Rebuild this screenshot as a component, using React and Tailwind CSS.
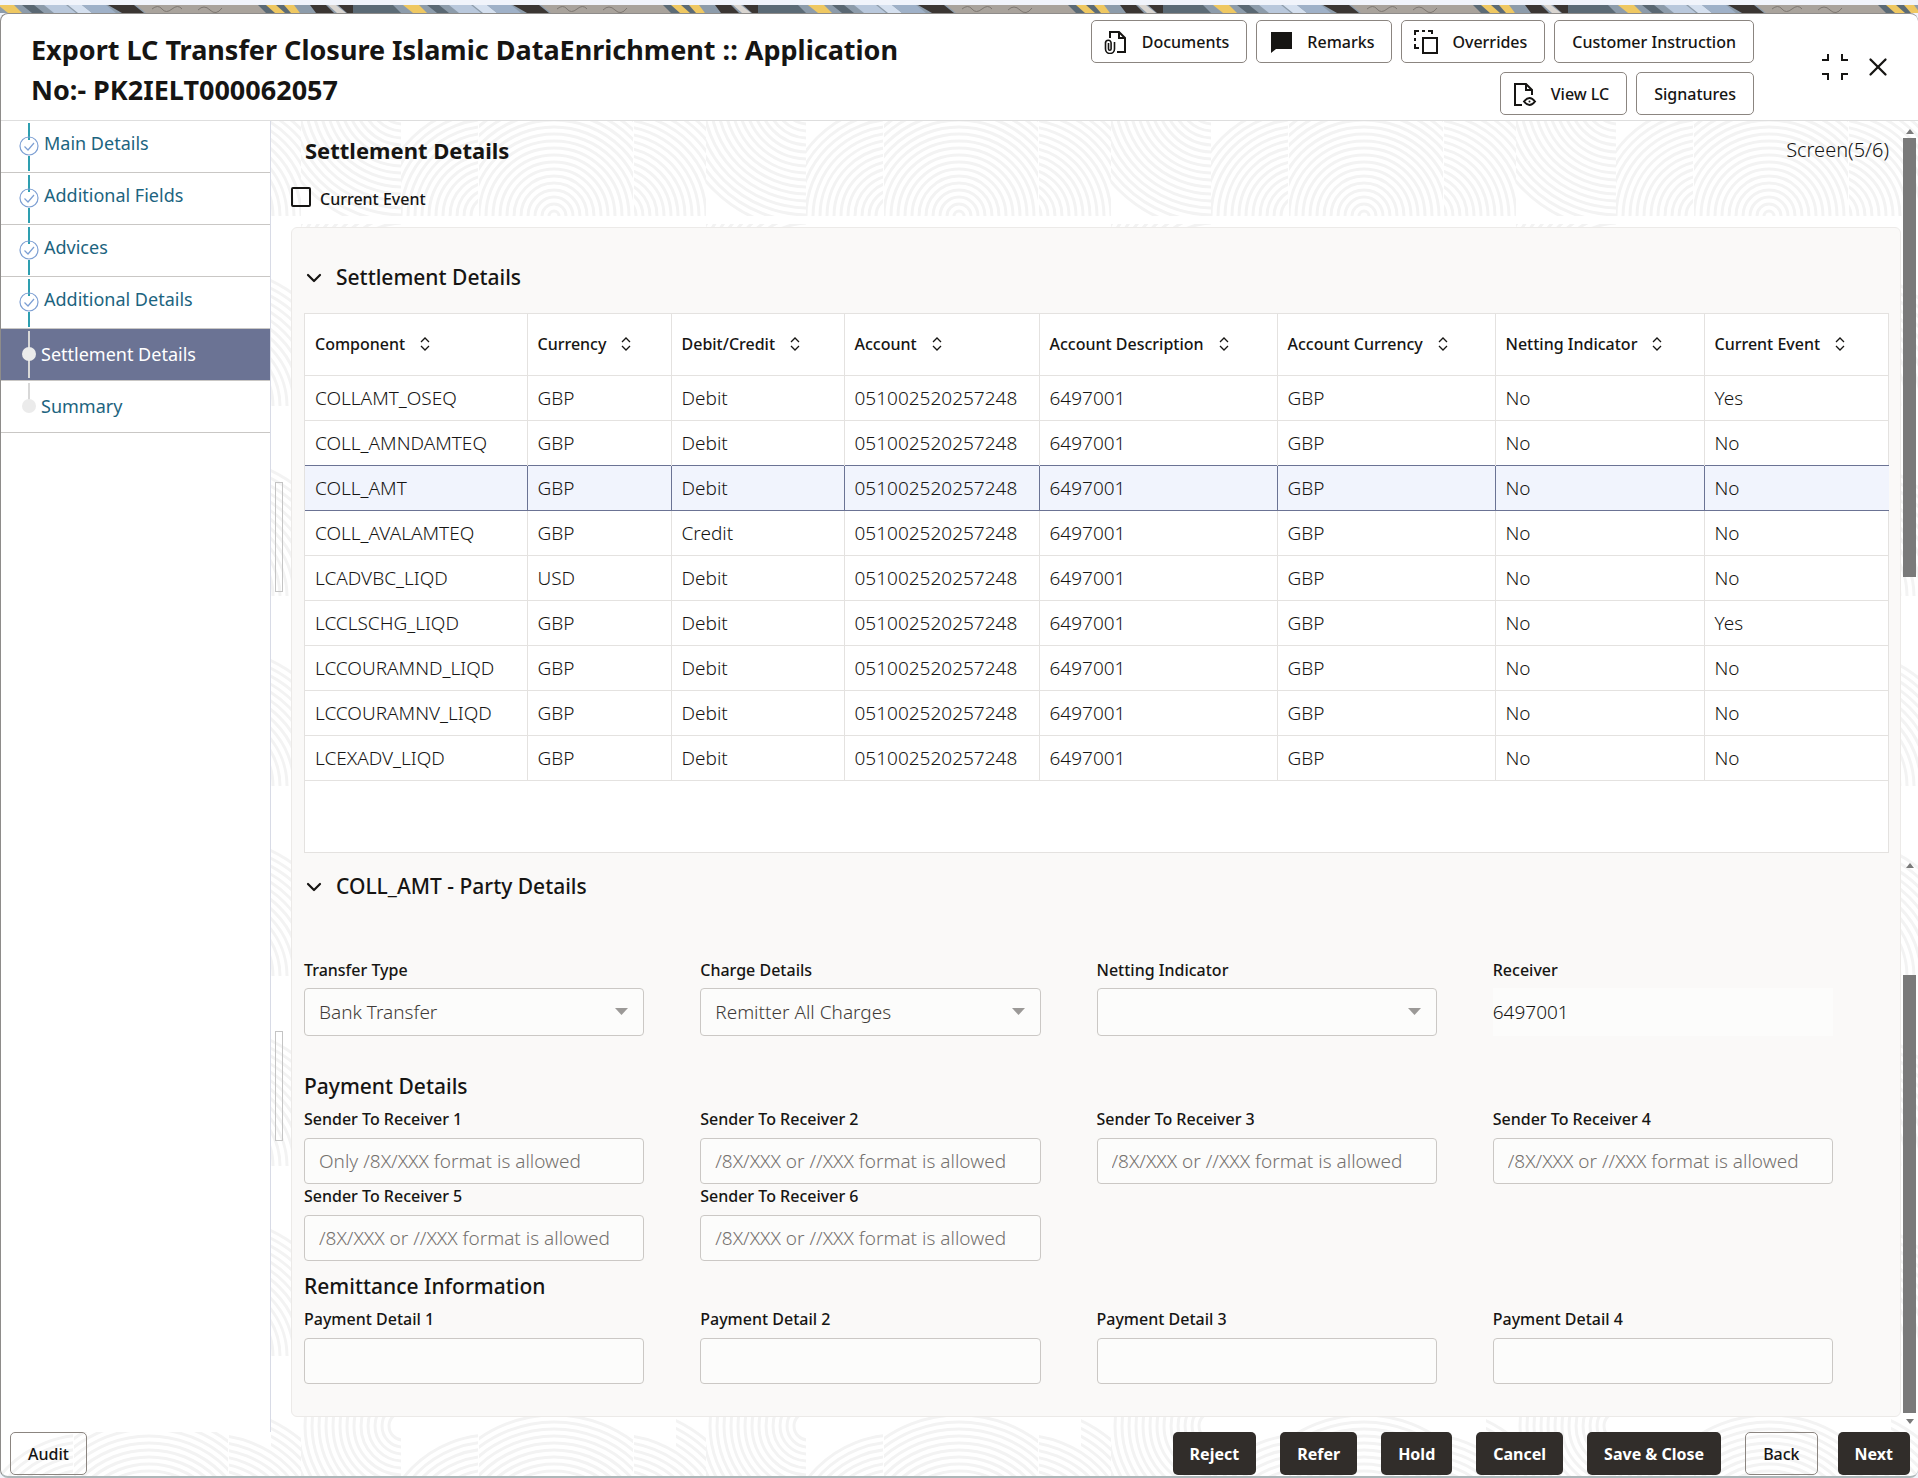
import React, { useState } from "react";
import { ChevronDown, X } from "lucide-react";

const steps = [
  { label: "Main Details", status: "done" },
  { label: "Additional Fields", status: "done" },
  { label: "Advices", status: "done" },
  { label: "Additional Details", status: "done" },
  { label: "Settlement Details", status: "active" },
  { label: "Summary", status: "pending" },
];

const columns = [
  { key: "component", label: "Component", width: "w-[222px]" },
  { key: "currency", label: "Currency", width: "w-[144px]" },
  { key: "debitCredit", label: "Debit/Credit", width: "w-[173px]" },
  { key: "account", label: "Account", width: "w-[195px]" },
  { key: "description", label: "Account Description", width: "w-[238px]" },
  { key: "accountCurrency", label: "Account Currency", width: "w-[218px]" },
  { key: "netting", label: "Netting Indicator", width: "w-[209px]" },
  { key: "currentEvent", label: "Current Event", width: "w-[185px]" },
];

const makeRow = (component, currency, debitCredit, currentEvent) => ({
  component,
  currency,
  debitCredit,
  account: "051002520257248",
  description: "6497001",
  accountCurrency: "GBP",
  netting: "No",
  currentEvent,
});

const rows = [
  makeRow("COLLAMT_OSEQ", "GBP", "Debit", "Yes"),
  makeRow("COLL_AMNDAMTEQ", "GBP", "Debit", "No"),
  makeRow("COLL_AMT", "GBP", "Debit", "No"),
  makeRow("COLL_AVALAMTEQ", "GBP", "Credit", "No"),
  makeRow("LCADVBC_LIQD", "USD", "Debit", "No"),
  makeRow("LCCLSCHG_LIQD", "GBP", "Debit", "Yes"),
  makeRow("LCCOURAMND_LIQD", "GBP", "Debit", "No"),
  makeRow("LCCOURAMNV_LIQD", "GBP", "Debit", "No"),
  makeRow("LCEXADV_LIQD", "GBP", "Debit", "No"),
];

const defaultFormat = "/8X/XXX or //XXX format is allowed";

const senderFields = [
  { id: "sender1", label: "Sender To Receiver 1", placeholder: "Only /8X/XXX format is allowed" },
  { id: "sender2", label: "Sender To Receiver 2", placeholder: defaultFormat },
  { id: "sender3", label: "Sender To Receiver 3", placeholder: defaultFormat },
  { id: "sender4", label: "Sender To Receiver 4", placeholder: defaultFormat },
  { id: "sender5", label: "Sender To Receiver 5", placeholder: defaultFormat },
  { id: "sender6", label: "Sender To Receiver 6", placeholder: defaultFormat },
];

const paymentFields = [
  { id: "payment1", label: "Payment Detail 1" },
  { id: "payment2", label: "Payment Detail 2" },
  { id: "payment3", label: "Payment Detail 3" },
  { id: "payment4", label: "Payment Detail 4" },
];

const range = (count, first, step) => Array.from({ length: count }, (_, i) => first + i * step);

/* Decorative strip above the window */
const TopStrip = () => (
  <svg className="block w-full h-[8px]" aria-hidden="true">
    <defs>
      <pattern id="strip" width="405" height="8" patternUnits="userSpaceOnUse" x="-52">
        <rect width="405" height="8" fill="#8d9cab" />
        <path d="M0 0h40l8 8H0z" fill="#5c6b76" />
        <path d="M50 0h16l8 8H60z" fill="#efc862" />
        <path d="M74 0h12l10 8H84z" fill="#5a6873" />
        <path d="M96 0h22l10 8h-22z" fill="#b9c8dc" />
        <path d="M120 0h14l10 8h-14z" fill="#d5e0ef" />
        <path d="M134 0h24l10 8h-24z" fill="#9fb1c8" />
        <path d="M160 0h26l10 8h-22z" fill="#3b3633" />
        <path d="M188 0h130l8 8H198z" fill="#a9a39c" />
        <path d="M204 4q6-5 10 0t10 0 10 0M250 5q6-6 12 0t12-2" fill="none" stroke="#7d7771" strokeWidth="1" />
        <path d="M310 0h30l12 8h-34z" fill="#5c6b76" />
        <path d="M318 0h10l9 8h-10zM336 0h10l6 8h-9z" fill="#efc862" />
        <path d="M362 0h16l8 8h-18z" fill="#3b3633" />
        <path d="M380 0h8l10 8h-9z" fill="#d9d5d0" />
        <path d="M390 0h15v8h-6z" fill="#3b3633" />
      </pattern>
    </defs>
    <rect width="100%" height="100%" fill="url(#strip)" />
  </svg>
);

/* Faint repeating arcs behind the content */
const ArcBackground = () => (
  <svg className="absolute inset-0 w-full h-full" aria-hidden="true">
    <defs>
      <clipPath id="dome"><rect x="208" y="0" width="154" height="182" /></clipPath>
      <clipPath id="side"><rect x="130" y="0" width="77" height="182" /></clipPath>
      <clipPath id="bowl"><rect x="30" y="0" width="100" height="182" /></clipPath>
      <clipPath id="edge"><rect x="363" y="0" width="42" height="182" /></clipPath>
      <clipPath id="corner"><rect x="0" y="0" width="30" height="182" /></clipPath>
      <pattern id="arcs" width="405" height="190" patternUnits="userSpaceOnUse" x="270" y="-87">
        <g fill="none" stroke="#f3f3f3" strokeWidth="3">
          <g clipPath="url(#dome)">{range(19, 5, 7).map((r) => <circle key={r} cx="283" cy="182" r={r} />)}</g>
          <g clipPath="url(#side)">{range(14, 20, 7).map((r) => <circle key={r} cx="220" cy="182" r={r} />)}</g>
          <g clipPath="url(#bowl)">{range(18, 14, 7).map((r) => <circle key={r} cx="132" cy="62" r={r} />)}</g>
          <g clipPath="url(#edge)">{range(14, 20, 7).map((r) => <circle key={r} cx="345" cy="182" r={r} />)}</g>
          <g clipPath="url(#corner)">{range(18, 20, 7).map((r) => <circle key={r} cx="-60" cy="182" r={r} />)}</g>
        </g>
      </pattern>
    </defs>
    <rect width="100%" height="100%" fill="url(#arcs)" />
  </svg>
);

const DocumentsIcon = () => (
  <svg width="24" height="24" viewBox="0 0 24 24" fill="none" stroke="#161513" strokeWidth="2" aria-hidden="true">
    <path d="M6 8V2h9l6 6v14h-8" />
    <path d="M15 2v6h6" />
    <path d="M1.500 12v7a4.500 4.500 0 0 0 9 0v-7M1.500 13a2.800 2.800 0 0 1 5.600 0v6a1.300 1.300 0 0 1-2.600 0v-6M10.500 12v7" strokeWidth="1.600" />
  </svg>
);

const RemarksIcon = () => (
  <svg width="24" height="24" viewBox="0 0 24 24" fill="#161513" aria-hidden="true">
    <path d="M2 2h21v17H7l-5 4z" />
  </svg>
);

const OverridesIcon = () => (
  <svg width="24" height="24" viewBox="0 0 24 24" fill="none" stroke="#161513" strokeWidth="2" aria-hidden="true">
    <rect x="9" y="8" width="14" height="15" />
    <path d="M1 5V1h4M8 1h3M14 1h4v3M1 8v3M1 14v4h4" />
  </svg>
);

const ViewIcon = () => (
  <svg width="24" height="24" viewBox="0 0 24 24" fill="none" stroke="#161513" strokeWidth="2" aria-hidden="true">
    <path d="M9 23H2V2h11l6 6v5" />
    <path d="M13 2v6h6" />
    <path d="M11 19.500q5.500-7 11 0q-5.500 7-11 0z" />
    <circle cx="16.500" cy="19.500" r="1" fill="#161513" stroke="none" />
  </svg>
);

const MinimizeIcon = () => (
  <svg width="26" height="26" viewBox="0 0 26 26" fill="none" stroke="#161513" strokeWidth="2" aria-hidden="true">
    <path d="M0 6h6V0M20 0v6h6M0 20h6v6M20 26v-6h6" />
  </svg>
);

const SortIcon = () => (
  <svg width="12" height="14" viewBox="0 0 12 14" fill="none" stroke="#161513" strokeWidth="1.300" aria-hidden="true">
    <path d="M2 5l4-4 4 4M2 9l4 4 4-4" />
  </svg>
);

const OutlineButton = ({ icon, children }) => (
  <button
    type="button"
    className={`h-[43px] flex items-center gap-3.5 pr-[17px] ${icon ? "pl-3" : "pl-[17px]"} border border-[#8b8580] rounded-[5px] text-base font-medium whitespace-nowrap`}
  >
    {icon}
    {children}
  </button>
);

const SolidButton = ({ children }) => (
  <button type="button" className="h-[43px] px-[17px] rounded-[5px] bg-[#312d2a] text-white text-base font-bold whitespace-nowrap">
    {children}
  </button>
);

const StepMarker = ({ status }) => {
  if (status === "done") {
    return (
      <svg width="20" height="51" viewBox="0 0 20 51" fill="none" aria-hidden="true">
        <path d="M10 2v17M10 35v15" stroke="#2e9fb0" strokeWidth="2" />
        <circle cx="10" cy="25" r="9" stroke="#7d9fd3" strokeWidth="1.200" />
        <path d="M5.500 25.500l3.500 3.500 6-7" stroke="#7d9fd3" strokeWidth="1.200" />
      </svg>
    );
  }
  return (
    <svg width="20" height="51" viewBox="0 0 20 51" fill="none" aria-hidden="true">
      <path d={status === "active" ? "M10 2v47" : "M10 2v20"} stroke="#d8d8d8" strokeWidth="2" />
      <circle cx="10" cy="25" r="7" fill="#ebebeb" />
    </svg>
  );
};

const Field = ({ id, label, children }) => (
  <div>
    <label htmlFor={id} className="block text-base leading-6 font-medium">{label}</label>
    {children}
  </div>
);

const SelectField = ({ id, label, value }) => (
  <Field id={id} label={label}>
    <div className="relative mt-1.5">
      <select
        id={id}
        defaultValue={value}
        className="appearance-none w-full h-12 px-[14px] border border-[#cbc8c5] rounded-[4px] bg-[#fcfcfb] text-[19px] font-light text-[#3f3b38]"
      >
        <option value={value}>{value}</option>
      </select>
      <svg className="absolute right-4 top-5 pointer-events-none" width="13" height="7" viewBox="0 0 13 7" aria-hidden="true">
        <path d="M0 0h13l-6.500 7z" fill="#9b9997" />
      </svg>
    </div>
  </Field>
);

const TextField = ({ id, label, placeholder }) => (
  <Field id={id} label={label}>
    <input
      id={id}
      type="text"
      placeholder={placeholder}
      className="mt-[7px] block w-full h-[46px] px-[14px] border border-[#cbc8c5] rounded-[4px] bg-[#fcfcfb] text-[19px] font-light placeholder:text-[#75716e]"
    />
  </Field>
);

const SectionTitle = ({ children }) => (
  <h3 className="flex items-center gap-2.5 h-8 text-[21px] font-medium">
    <ChevronDown size={24} strokeWidth={2.2} className="-ml-0.5" />
    {children}
  </h3>
);

const ScrollArrow = ({ down }) => (
  <svg className="shrink-0" width="8" height="5" viewBox="0 0 8 5" aria-hidden="true">
    <path d={down ? "M0 0h8L4 5z" : "M0 5h8L4 0z"} fill="#7a7a7a" />
  </svg>
);

const App = () => {
  const [currentEvent, setCurrentEvent] = useState(false);
  const [selected, setSelected] = useState("COLL_AMT");

  return (
    <div className="min-h-screen flex flex-col bg-[#f1f4fb] pt-[5px] font-['Noto_Sans',sans-serif] text-[#161513]">
      <TopStrip />
      <div className="flex-1 flex flex-col bg-white border border-[#8e8c8a] border-b-2 border-b-[#adb7b9] border-r-0 rounded-lg overflow-hidden">
        {/* Header */}
        <header className="flex border-b border-[#dedede] h-[107px] pl-[30px] pr-[25px]">
          <h1 className="flex-1 max-w-[900px] pt-4 text-[27px] leading-10 font-bold">
            Export LC Transfer Closure Islamic DataEnrichment :: Application No:- PK2IELT000062057
          </h1>
          <div className="ml-auto w-[700px] shrink-0 pt-[6px] flex flex-wrap justify-end content-start gap-[9px]">
            <OutlineButton icon={<DocumentsIcon />}>Documents</OutlineButton>
            <OutlineButton icon={<RemarksIcon />}>Remarks</OutlineButton>
            <OutlineButton icon={<OverridesIcon />}>Overrides</OutlineButton>
            <OutlineButton>Customer Instruction</OutlineButton>
            <OutlineButton icon={<ViewIcon />}>View LC</OutlineButton>
            <OutlineButton>Signatures</OutlineButton>
          </div>
          <div className="flex items-center gap-[15px] ml-[68px]">
            <button type="button" aria-label="Minimize"><MinimizeIcon /></button>
            <button type="button" aria-label="Close"><X size={30} strokeWidth={1.8} /></button>
          </div>
        </header>

        <div className="relative flex-1 flex flex-col">
          <ArcBackground />

          <div className="relative flex-1 flex">
            {/* Steps */}
            <nav className="w-[270px] shrink-0 bg-white border-r border-[#d8dbe6]">
              <ul>
                {steps.map((step) => (
                  <li
                    key={step.label}
                    className={
                      step.status === "active"
                        ? "border-b border-[#c9c7c5] bg-[#6b7394] text-white"
                        : "border-b border-[#c9c7c5] text-[#1c6480]"
                    }
                  >
                    <a
                      href="#"
                      className={
                        step.status === "done"
                          ? "flex items-center h-[51px] pl-[18px] gap-[5px] text-lg"
                          : "flex items-center h-[51px] pl-[18px] gap-0.5 text-lg"
                      }
                    >
                      <StepMarker status={step.status} />
                      <span className={step.status === "done" ? "pb-2" : "pb-0.5"}>{step.label}</span>
                    </a>
                  </li>
                ))}
              </ul>
            </nav>

            {/* Splitter handles */}
            <div className="w-5 shrink-0 flex flex-col items-start pl-1">
              <div className="mt-[361px] w-[8px] h-[110px] border border-[#c4c4c4]" />
              <div className="mt-[439px] w-[8px] h-[110px] border border-[#c4c4c4]" />
            </div>

            <main className="flex-1 min-w-0 pb-[13px]">
              <div className="flex items-center justify-between h-[58px] pl-[14px] pr-3">
                <h2 className="text-[22px] font-bold">Settlement Details</h2>
                <span className="text-xl font-light">Screen(5/6)</span>
              </div>
              <label className="flex items-center gap-[9px] h-10 text-base font-medium mb-2">
                <input
                  type="checkbox"
                  checked={currentEvent}
                  onChange={(e) => setCurrentEvent(e.target.checked)}
                  className="appearance-none w-5 h-5 mb-1 border-2 border-[#161513] rounded-[2px] checked:bg-[#161513]"
                />
                Current Event
              </label>

              <section className="border border-[#eceae8] rounded-md bg-[#faf9f8] pl-3 pr-[11px] pt-[34px] pb-8">
                <SectionTitle>Settlement Details</SectionTitle>

                <div className="mt-[19px] h-[540px] bg-white border border-[#e4e2e0]">
                  <table className="w-full table-fixed border-collapse text-left">
                    <thead>
                      <tr className="h-[61px]">
                        {columns.map((col) => (
                          <th
                            key={col.key}
                            className={`${col.width} px-[10px] border-b border-r last:border-r-0 border-[#e4e2e0] text-base font-medium whitespace-nowrap`}
                          >
                            <span className="inline-flex items-center gap-[14px]">
                              {col.label}
                              <SortIcon />
                            </span>
                          </th>
                        ))}
                      </tr>
                    </thead>
                    <tbody>
                      {rows.map((row) => (
                        <tr
                          key={row.component}
                          onClick={() => setSelected(row.component)}
                          className={
                            row.component === selected
                              ? "h-[45px] bg-[#f1f4fd] [&>td]:border-y [&>td]:border-[#6b7394]"
                              : "h-[45px] border-b border-[#e4e2e0] [&>td]:border-[#e4e2e0]"
                          }
                        >
                          {columns.map((col) => (
                            <td key={col.key} className="px-[10px] border-r last:border-r-0 text-[19px] leading-7 font-light">
                              {row[col.key]}
                            </td>
                          ))}
                        </tr>
                      ))}
                    </tbody>
                  </table>
                </div>

                <div className="mt-[18px]">
                  <SectionTitle>{selected} - Party Details</SectionTitle>
                </div>

                <div className="mt-[55px] mr-14 grid grid-cols-4 gap-x-14">
                  <SelectField id="transferType" label="Transfer Type" value="Bank Transfer" />
                  <SelectField id="chargeDetails" label="Charge Details" value="Remitter All Charges" />
                  <SelectField id="nettingIndicator" label="Netting Indicator" value="" />
                  <Field id="receiver" label="Receiver">
                    <input id="receiver" type="text" readOnly value="6497001" className="mt-1.5 block w-full h-12 bg-[#fcfcfb] text-[19px] font-light" />
                  </Field>
                </div>

                <h3 className="mt-[34px] h-8 text-[21px] leading-8 font-medium">Payment Details</h3>
                <div className="mt-[5px] mr-14 grid grid-cols-4 gap-x-14">
                  {senderFields.map((field) => (
                    <TextField key={field.id} {...field} />
                  ))}
                </div>

                <h3 className="mt-[9px] h-8 text-[21px] leading-8 font-medium">Remittance Information</h3>
                <div className="mt-[5px] mr-14 grid grid-cols-4 gap-x-14">
                  {paymentFields.map((field) => (
                    <TextField key={field.id} {...field} />
                  ))}
                </div>
              </section>
            </main>

            {/* Scroll tracks */}
            <div className="w-[17px] shrink-0 flex flex-col items-center pt-2 pb-2">
              <ScrollArrow />
              <div className="mt-1 w-[13px] h-[439px] bg-[#7a7a7a]" />
              <div className="h-[286px]" />
              <ScrollArrow />
              <div className="mt-[107px] w-[13px] flex-1 bg-[#7a7a7a] mb-[6px]" />
              <ScrollArrow down />
            </div>
          </div>

          {/* Footer */}
          <footer className="relative flex items-start h-11 pl-[9px] pr-2">
            <OutlineButton>Audit</OutlineButton>
            <div className="ml-auto flex gap-6">
              <SolidButton>Reject</SolidButton>
              <SolidButton>Refer</SolidButton>
              <SolidButton>Hold</SolidButton>
              <SolidButton>Cancel</SolidButton>
              <SolidButton>Save &amp; Close</SolidButton>
              <div className="flex gap-5">
                <OutlineButton>Back</OutlineButton>
                <SolidButton>Next</SolidButton>
              </div>
            </div>
          </footer>
        </div>
      </div>
    </div>
  );
};

export default App;
